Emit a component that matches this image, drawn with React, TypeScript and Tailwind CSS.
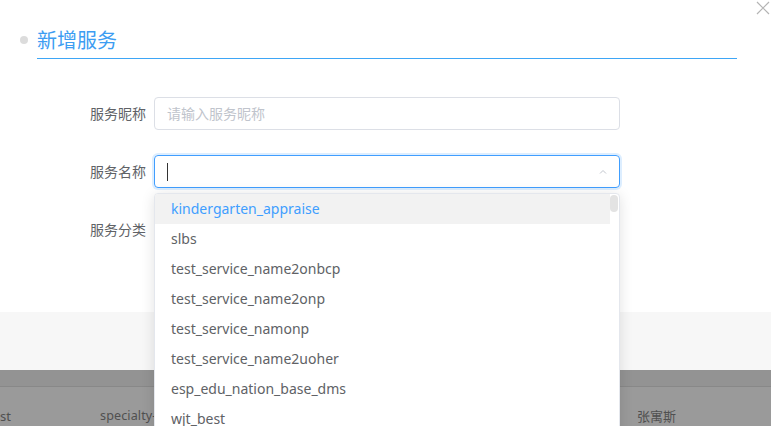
import React from "react";

const items = [
  "kindergarten_appraise",
  "slbs",
  "test_service_name2onbcp",
  "test_service_name2onp",
  "test_service_namonp",
  "test_service_name2uoher",
  "esp_edu_nation_base_dms",
  "wjt_best",
];

export default function App() {
  return (
    <div
      className="relative w-[771px] h-[426px] overflow-hidden bg-white flex flex-col"
      style={{ fontFamily: '"Noto Sans", "Noto Sans CJK SC", sans-serif' }}
    >
      {/* modal body */}
      <div className="relative h-[312px] shrink-0 bg-white">
        <svg className="absolute right-[1px] top-[1px]" width="14" height="14" viewBox="0 0 14 14">
          <path d="M1 1 L13 13 M13 1 L1 13" stroke="#b4b4b4" strokeWidth="1.2" fill="none" />
        </svg>

        <div className="flex items-start ml-[20px] pt-[25px]">
          <div className="w-[8px] h-[8px] rounded-full bg-[#dcdcdc] mt-[11px] mr-[9px]" />
          <div className="w-[700px] border-b border-[#3ea6f6] pb-[3px] text-[20px] leading-[30px] text-[#3d9df2]" style={{ fontFamily: '"Noto Sans CJK SC", sans-serif' }}>
            新增服务
          </div>
        </div>

        <div className="mt-[38px] flex flex-col gap-[25px]">
          <div className="flex items-center">
            <div className="w-[146px] text-right text-[14px] text-[#606266]" style={{ fontFamily: '"Noto Sans CJK SC", sans-serif' }}>服务昵称</div>
            <div className="ml-[8px] w-[466px] h-[33px] rounded-[4px] border border-[#dcdfe6] flex items-center pl-[12px] text-[14px] text-[#c0c4cc]" style={{ fontFamily: '"Noto Sans CJK SC", sans-serif' }}>
              请输入服务昵称
            </div>
          </div>
          <div className="flex items-center">
            <div className="w-[146px] text-right text-[14px] text-[#606266]" style={{ fontFamily: '"Noto Sans CJK SC", sans-serif' }}>服务名称</div>
            <div className="ml-[8px] w-[466px] h-[33px] rounded-[4px] border border-[#409eff] shadow-[0_0_0_2px_rgba(64,158,255,0.18)] flex items-center pl-[12px] pr-[12px] justify-between">
              <div className="w-[1px] h-[18px] bg-[#333]" />
              <svg width="8" height="5" viewBox="0 0 8 5">
                <path d="M1 4.5 L4 1.5 L7 4.5" stroke="#c0c4cc" strokeWidth="1" fill="none" />
              </svg>
            </div>
          </div>
          <div className="flex items-center h-[33px]">
            <div className="w-[146px] text-right text-[14px] text-[#606266]" style={{ fontFamily: '"Noto Sans CJK SC", sans-serif' }}>服务分类</div>
          </div>
        </div>
      </div>

      {/* modal footer */}
      <div className="h-[58px] shrink-0 bg-[#f7f7f7]" />

      {/* masked table */}
      <div className="flex-1 bg-[#9a9a9a] flex flex-col">
        <div className="h-[17px] bg-[#939393] border-b border-[#888888]" />
        <div className="relative flex-1 text-[13px] text-[#505050]">
          <span className="absolute left-0 top-[20px] leading-[18px]">st</span>
          <span className="absolute left-[100px] top-[20px] leading-[18px] w-[54px] overflow-hidden whitespace-nowrap tracking-[0.1px] text-[12.6px]">specialty-</span>
          <span className="absolute left-[637px] top-[20px] leading-[18px]" style={{ fontFamily: '"Noto Sans CJK SC", sans-serif' }}>张寓斯</span>
        </div>
      </div>

      {/* dropdown */}
      <div className="absolute left-[154px] top-[193px] w-[466px] h-[250px] bg-white border border-[#e4e7ed] rounded-[4px] shadow-[0_2px_14px_rgba(0,0,0,0.12)] overflow-hidden">
        <div className="w-[455px]">
          {items.map((t, i) => (
            <div
              key={t}
              className={
                i === 0
                  ? "h-[30px] leading-[29px] pl-[16px] text-[14px] bg-[#f2f2f2] text-[#409eff]"
                  : "h-[30px] leading-[29px] pl-[16px] text-[14px] text-[#606266]"
              }
            >
              {t}
            </div>
          ))}
        </div>
        <div className="absolute right-[1px] top-[1px] w-[8px] h-[17px] rounded-[4px] bg-[#e3e3e3]" />
      </div>
    </div>
  );
}
